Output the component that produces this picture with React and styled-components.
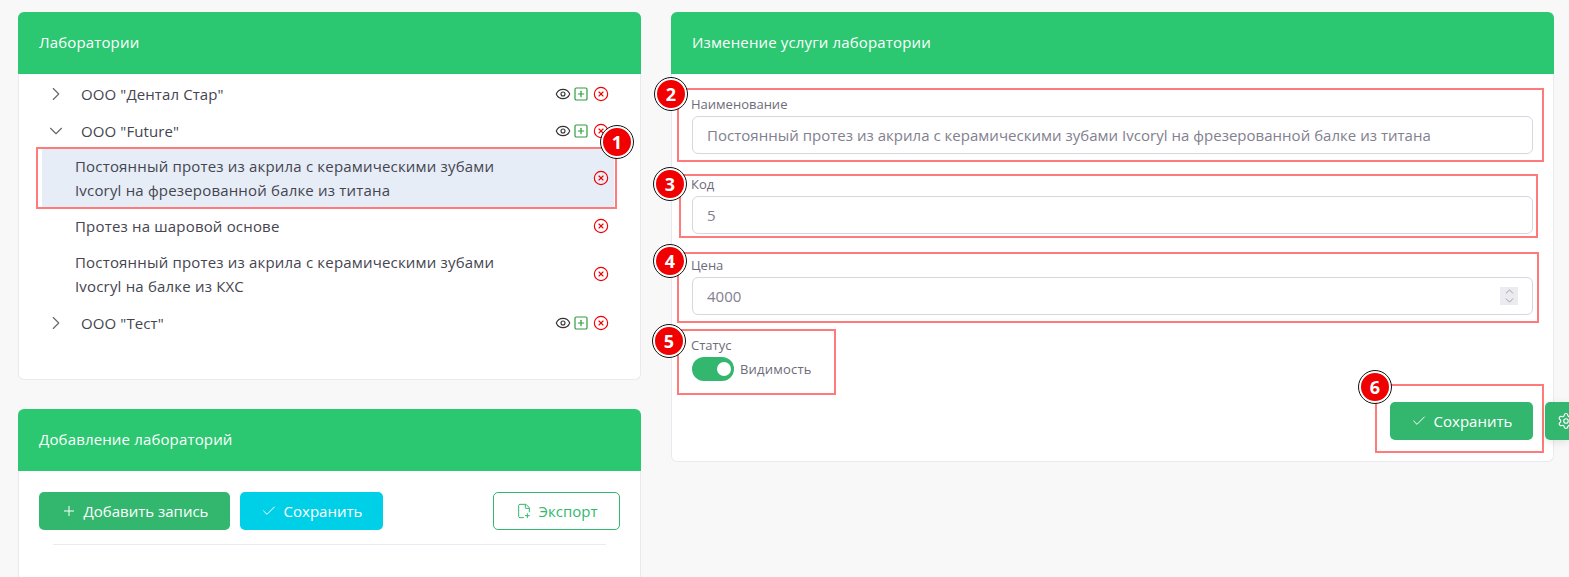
import React from 'react';
import styled, { createGlobalStyle } from 'styled-components';
import { ChevronRight, ChevronDown, ChevronUp, Eye, SquarePlus, CircleX, Check, Plus, FilePlus2, Settings } from 'lucide-react';

const mainFont = '"Open Sans", "Noto Sans", "Liberation Sans", sans-serif';

const GlobalStyle = createGlobalStyle`
  html, body {
    margin: 0;
    height: 577px;
    overflow: hidden;
    background: #f8f8f8;
    font-family: ${mainFont};
  }
`;

const Page = styled.div`
  position: relative;
  display: grid;
  grid-template-columns: 623px 883px;
  column-gap: 30px;
  align-items: start;
  padding: 12px 0 0 18px;
  height: 565px;
  overflow: hidden;
`;

const Column = styled.div`
  display: flex;
  flex-direction: column;
  gap: 29px;
`;

const Card = styled.section`
  background: #fff;
  border: 1px solid #e9e9ef;
  border-top: 0;
  border-radius: 6px;
  box-sizing: border-box;
  height: ${(p) => p.$height}px;
`;

const CardHeader = styled.h2`
  margin: 0 -1px;
  height: 62px;
  box-sizing: border-box;
  display: flex;
  align-items: center;
  padding: 0 0 3px 21px;
  background: #2bc871;
  border-radius: 6px 6px 0 0;
  color: #fff;
  font-size: 15px;
  font-weight: 400;
  letter-spacing: 0.15px;
`;

const Tree = styled.div`
  padding-top: 2px;
`;

const TreeParent = styled.div`
  display: flex;
  align-items: center;
  height: 36px;
  margin-top: ${(p) => p.$top || 0}px;
  padding: 0 31px 0 26px;
  color: #454550;
  font-size: 15px;
  letter-spacing: 0.1px;
`;

const Twisty = styled.span`
  display: flex;
  width: 22px;
  margin-right: 14px;
  color: #666;
`;

const NodeName = styled.span`
  flex: 1;
`;

const IconGroup = styled.span`
  display: flex;
  align-items: center;
  gap: 2px;
`;

const DeleteIcon = styled(CircleX)`
  margin-left: ${(p) => p.$gap || 0}px;
  flex-shrink: 0;
`;

const ChildRow = styled.div`
  position: relative;
  display: flex;
  align-items: center;
  justify-content: space-between;
  min-height: ${(p) => p.$minHeight}px;
  box-sizing: border-box;
  margin: 0 26px 0 23px;
  padding: 0 5px 0 33px;
  background: ${(p) => (p.$selected ? '#e6edf7' : 'transparent')};
  color: #454550;
  font-size: 15px;
  letter-spacing: 0.18px;
  line-height: 24px;
`;

const ChildText = styled.span`
  width: 440px;
`;

const Marker = styled.span`
  position: absolute;
  top: ${(p) => p.$top}px;
  left: ${(p) => p.$left}px;
  right: ${(p) => p.$right}px;
  bottom: ${(p) => p.$bottom}px;
  border: 2px solid #ff7b7b;
  pointer-events: none;
`;

const Badge = styled.span`
  position: absolute;
  top: ${(p) => p.$top}px;
  left: ${(p) => p.$left}px;
  width: 28px;
  height: 28px;
  display: flex;
  align-items: center;
  justify-content: center;
  box-sizing: content-box;
  border: 2px solid #fff;
  outline: 1px solid #111;
  border-radius: 50%;
  background: #f00000;
  color: #fff;
  font-size: 18px;
  font-weight: 700;
  z-index: 2;
`;

const FormBody = styled.div`
  padding: 0 20px;
  display: flex;
  flex-direction: column;
`;

const Field = styled.div`
  position: relative;
  margin-top: ${(p) => p.$top}px;
`;

const Label = styled.label`
  display: block;
  color: #6e6b7b;
  font-size: 13px;
  line-height: 14px;
  margin: 0 0 5px -1px;
`;

const InputWrap = styled.div`
  position: relative;
`;

const TextInput = styled.input`
  display: block;
  width: 100%;
  height: 38px;
  box-sizing: border-box;
  padding: 0 14px;
  border: 1px solid #d8d6de;
  border-radius: 6px;
  background: #fff;
  color: #82808f;
  font-family: ${mainFont};
  font-size: 15px;
  letter-spacing: 0.02px;
  outline: none;
`;

const Spinner = styled.span`
  position: absolute;
  top: 10px;
  right: 15px;
  width: 18px;
  height: 18px;
  display: flex;
  flex-direction: column;
  align-items: center;
  justify-content: center;
  background: #ebebf0;
  color: #8d8d99;
  svg { margin: -2px 0; }
`;

const StatusRow = styled.div`
  display: flex;
  align-items: center;
  gap: 6px;
`;

const Toggle = styled.span`
  display: flex;
  justify-content: flex-end;
  align-items: center;
  width: 42px;
  height: 24px;
  box-sizing: border-box;
  padding-right: 3px;
  border-radius: 12px;
  background: #33b76e;
`;

const Knob = styled.span`
  width: 14px;
  height: 14px;
  border-radius: 50%;
  background: #fff;
`;

const ToggleLabel = styled.span`
  color: #6e6b7b;
  font-size: 13px;
  letter-spacing: 0.2px;
`;

const Actions = styled.div`
  position: relative;
  display: flex;
  justify-content: flex-end;
  margin-top: 21px;
`;

const Button = styled.button`
  display: inline-flex;
  align-items: center;
  justify-content: center;
  gap: 7px;
  width: ${(p) => p.$width}px;
  height: 38px;
  border: ${(p) => (p.$outline ? '1px solid #33b76e' : '0')};
  border-radius: 5px;
  background: ${(p) => p.$bg || '#fff'};
  color: ${(p) => (p.$outline ? '#33b76e' : '#fff')};
  font-family: ${mainFont};
  font-size: 15px;
  padding: 0;
`;

const Toolbar = styled.div`
  display: flex;
  gap: 10px;
  padding: 21px 20px 0;
`;

const ToolbarEnd = styled.div`
  margin-left: auto;
`;

const Divider = styled.hr`
  margin: 14px 34px 0;
  border: 0;
  border-top: 1px solid #ebe9f1;
`;

const GearTab = styled.span`
  position: absolute;
  top: 402px;
  right: 0;
  width: 24px;
  height: 38px;
  display: flex;
  align-items: center;
  padding-left: 12px;
  box-sizing: border-box;
  overflow: hidden;
  border-radius: 5px 0 0 5px;
  background: #33b76e;
  color: #fff;
  box-shadow: 0 2px 8px rgba(0, 0, 0, 0.1);
  svg { flex-shrink: 0; }
`;

const RED = '#f00000';

const Row = ({ name, open, top }) => (
  <TreeParent $top={top}>
    <Twisty>{open ? <ChevronDown size={22} strokeWidth={1.2} /> : <ChevronRight size={22} strokeWidth={1.2} />}</Twisty>
    <NodeName>{name}</NodeName>
    <IconGroup>
      <Eye size={16} color="#333" strokeWidth={1.7} />
      <SquarePlus size={16} color="#2e9e3f" strokeWidth={1.8} />
      <DeleteIcon $gap={2} size={16} color={RED} strokeWidth={1.7} />
    </IconGroup>
  </TreeParent>
);

const App = () => (
  <Page>
    <GlobalStyle />
    <Column>
      <Card $height={368}>
        <CardHeader>Лаборатории</CardHeader>
        <Tree>
          <Row name={'ООО "Дентал Стар"'} />
          <Row name={'ООО "Future"'} top={1} open />
          <ChildRow $minHeight={58} $selected>
            <ChildText>Постоянный протез из акрила с керамическими зубами Ivcoryl на фрезерованной балке из титана</ChildText>
            <DeleteIcon size={16} color={RED} strokeWidth={1.7} />
            <Marker $top={-2} $left={-6} $right={-3} $bottom={-2} />
            <Badge $top={-23} $left={559}>1</Badge>
          </ChildRow>
          <ChildRow $minHeight={38}>
            <ChildText>Протез на шаровой основе</ChildText>
            <DeleteIcon size={16} color={RED} strokeWidth={1.7} />
          </ChildRow>
          <ChildRow $minHeight={58}>
            <ChildText>Постоянный протез из акрила с керамическими зубами Ivocryl на балке из КХС</ChildText>
            <DeleteIcon size={16} color={RED} strokeWidth={1.7} />
          </ChildRow>
          <Row name={'ООО "Тест"'} top={2} />
        </Tree>
      </Card>
      <Card $height={300}>
        <CardHeader>Добавление лабораторий</CardHeader>
        <Toolbar>
          <Button $width={191} $bg="#33b76e"><Plus size={16} strokeWidth={1.5} />Добавить запись</Button>
          <Button $width={143} $bg="#00cfe8"><Check size={16} strokeWidth={1.5} />Сохранить</Button>
          <ToolbarEnd>
            <Button $width={127} $outline><FilePlus2 size={16} strokeWidth={1.5} />Экспорт</Button>
          </ToolbarEnd>
        </Toolbar>
        <Divider />
      </Card>
    </Column>
    <Card $height={450}>
      <CardHeader>Изменение услуги лаборатории</CardHeader>
      <FormBody>
        <Field $top={23}>
          <Label>Наименование</Label>
          <TextInput readOnly value="Постоянный протез из акрила с керамическими зубами Ivcoryl на фрезерованной балке из титана" />
          <Marker $top={-9} $left={-15} $right={-11} $bottom={-8} />
          <Badge $top={-19} $left={-37}>2</Badge>
        </Field>
        <Field $top={23}>
          <Label>Код</Label>
          <TextInput readOnly value="5" />
          <Marker $top={-3} $left={-13} $right={-5} $bottom={-4} />
          <Badge $top={-9} $left={-38}>3</Badge>
        </Field>
        <Field $top={24}>
          <Label>Цена</Label>
          <InputWrap>
            <TextInput readOnly value="4000" />
            <Spinner><ChevronUp size={13} strokeWidth={1.5} /><ChevronDown size={13} strokeWidth={1.5} /></Spinner>
          </InputWrap>
          <Marker $top={-6} $left={-15} $right={-6} $bottom={-8} />
          <Badge $top={-13} $left={-38}>4</Badge>
        </Field>
        <Field $top={23}>
          <Label>Статус</Label>
          <StatusRow>
            <Toggle><Knob /></Toggle>
            <ToggleLabel>Видимость</ToggleLabel>
          </StatusRow>
          <Marker $top={-9} $left={-15} $right={697} $bottom={-14} />
          <Badge $top={-13} $left={-39}>5</Badge>
        </Field>
        <Actions>
          <Button $width={143} $bg="#33b76e"><Check size={16} strokeWidth={1.5} />Сохранить</Button>
          <Marker $top={-18} $left={683} $right={-11} $bottom={-13} />
          <Badge $top={-31} $left={667}>6</Badge>
        </Actions>
      </FormBody>
    </Card>
    <GearTab><Settings size={18} strokeWidth={1.5} /></GearTab>
  </Page>
);

export default App;
